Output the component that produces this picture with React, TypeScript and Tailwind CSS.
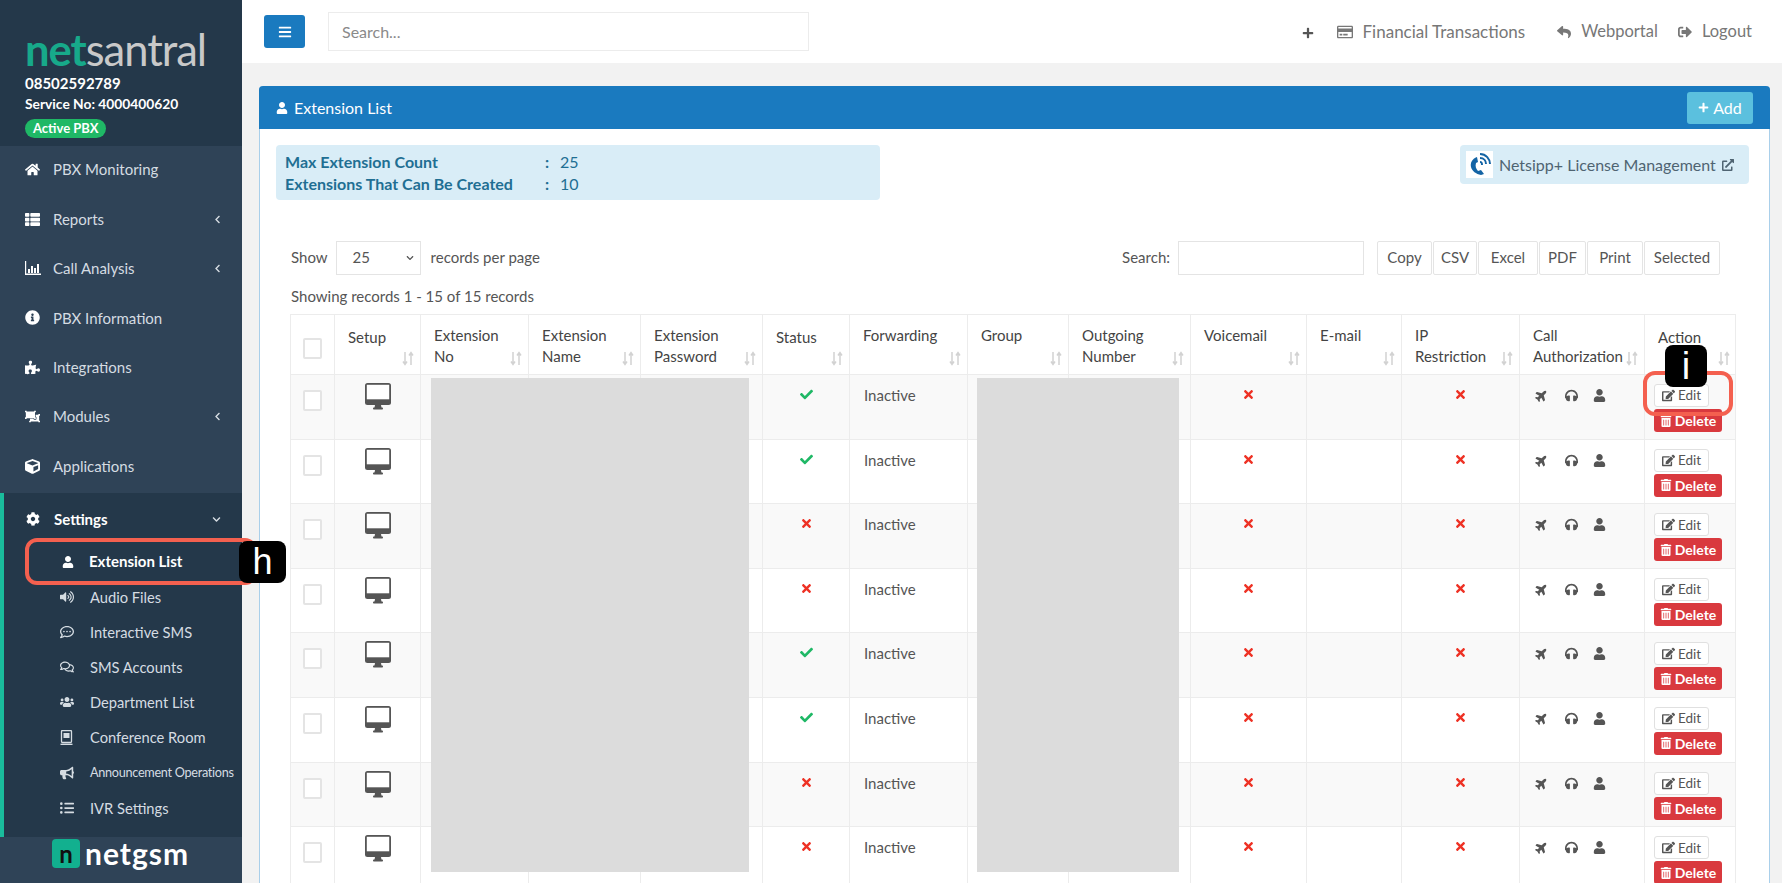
import type { ReactNode } from "react";
import {
  FaBars,
  FaBullhorn,
  FaCheck,
  FaChevronDown,
  FaChevronLeft,
  FaCog,
  FaCube,
  FaEdit,
  FaExternalLinkAlt,
  FaHeadphones,
  FaHome,
  FaInfoCircle,
  FaListUl,
  FaObjectUngroup,
  FaPlane,
  FaPlus,
  FaPuzzlePiece,
  FaRegComments,
  FaRegCommentDots,
  FaRegCreditCard,
  FaReply,
  FaSignOutAlt,
  FaThList,
  FaTimes,
  FaTrashAlt,
  FaUser,
  FaUsers,
  FaVolumeUp,
} from "react-icons/fa";

const font = "font-['Lato','Open_Sans',sans-serif]";

function BarChartIcon() {
  return (
    <svg width="16" height="14" viewBox="0 0 16 14" fill="currentColor">
      <path d="M0 0h1.2v12.6H16V14H0z" />
      <path d="M3 8h2v4H3zM6 5h2v7H6zM9 7h2v5H9zM12 3h2v9h-2z" />
    </svg>
  );
}

function ConferenceIcon() {
  return (
    <svg width="13" height="15" viewBox="0 0 13 15" fill="none" stroke="currentColor">
      <rect x="1.5" y="0.5" width="10" height="12" rx="1" strokeWidth="1.3" />
      <rect x="3.5" y="3" width="6" height="5" fill="currentColor" stroke="none" />
      <path d="M0.5 14.3h12" strokeWidth="1.4" />
    </svg>
  );
}

function MonitorIcon() {
  return (
    <svg width="26" height="27" viewBox="0 0 26 27">
      <rect x="0" y="0" width="26" height="22" rx="2.5" fill="#555" />
      <rect x="1.8" y="1.8" width="22.4" height="14.5" fill="#fff" />
      <path d="M10 22h6l.6 3H9.4z" fill="#555" />
      <rect x="8" y="24.6" width="10" height="2" rx="0.8" fill="#555" />
    </svg>
  );
}

const mainMenu = [
  { label: "PBX Monitoring", icon: <FaHome />, arrow: false },
  { label: "Reports", icon: <FaThList />, arrow: true },
  { label: "Call Analysis", icon: <BarChartIcon />, arrow: true },
  { label: "PBX Information", icon: <FaInfoCircle />, arrow: false },
  { label: "Integrations", icon: <FaPuzzlePiece />, arrow: false },
  { label: "Modules", icon: <FaObjectUngroup />, arrow: true },
  { label: "Applications", icon: <FaCube />, arrow: false },
];

const subMenu: { label: string; icon: ReactNode; small?: boolean }[] = [
  { label: "Audio Files", icon: <FaVolumeUp /> },
  { label: "Interactive SMS", icon: <FaRegCommentDots /> },
  { label: "SMS Accounts", icon: <FaRegComments /> },
  { label: "Department List", icon: <FaUsers /> },
  { label: "Conference Room", icon: <ConferenceIcon /> },
  { label: "Announcement Operations", icon: <FaBullhorn />, small: true },
  { label: "IVR Settings", icon: <FaListUl /> },
];

const columns = [
  { label: ["Setup"], width: "w-[86px]", single: true },
  { label: ["Extension", "No"], width: "w-[108px]" },
  { label: ["Extension", "Name"], width: "w-[112px]" },
  { label: ["Extension", "Password"], width: "w-[122px]" },
  { label: ["Status"], width: "w-[87px]", single: true },
  { label: ["Forwarding"], width: "w-[118px]" },
  { label: ["Group"], width: "w-[101px]" },
  { label: ["Outgoing", "Number"], width: "w-[122px]" },
  { label: ["Voicemail"], width: "w-[116px]" },
  { label: ["E-mail"], width: "w-[95px]" },
  { label: ["IP", "Restriction"], width: "w-[118px]" },
  { label: ["Call", "Authorization"], width: "w-[125px]" },
  { label: ["Action"], width: "w-[91px]", single: true },
];

const exportButtons = [
  { label: "Copy", width: "w-[55px]" },
  { label: "CSV", width: "w-[44px]" },
  { label: "Excel", width: "w-[60px]" },
  { label: "PDF", width: "w-[47px]" },
  { label: "Print", width: "w-[56px]" },
  { label: "Selected", width: "w-[76px]" },
];

const statuses = [true, true, false, false, true, true, false, false];

function SortIcon() {
  return (
    <svg width="12" height="15" viewBox="0 0 12 15" className="text-[#d2d2d2]" fill="none" stroke="currentColor" strokeWidth="1.5">
      <path d="M3 1v12M1 10.5l2 3 2-3" />
      <path d="M9 14V2M7 4.5l2-3 2 3" />
    </svg>
  );
}

function Row({ active, index }: { active: boolean; index: number }) {
  const cell = "border-r border-[#ececec] shrink-0";
  return (
    <div className={`flex h-[64.6px] border-b border-[#ececec] ${index % 2 === 0 ? "bg-[#f9f9f9]" : "bg-white"}`}>
      <div className={`${cell} flex w-[44px] justify-center pt-[15px]`}>
        <span className="h-[21px] w-[19px] rounded-[2px] border-2 border-[#e4e4e4] bg-white" />
      </div>
      <div className={`${cell} flex w-[86px] justify-center pt-[8px]`}>
        <MonitorIcon />
      </div>
      <div className={`${cell} w-[108px]`} />
      <div className={`${cell} w-[112px]`} />
      <div className={`${cell} w-[122px]`} />
      <div className={`${cell} flex w-[87px] justify-center pt-[13px] text-[13px]`}>
        {active ? <FaCheck className="text-[#1fb866]" /> : <FaTimes className="text-[#ee3124]" />}
      </div>
      <div className={`${cell} w-[118px] pl-[14px] pt-[9px] text-[15px] text-[#555]`}>Inactive</div>
      <div className={`${cell} w-[101px]`} />
      <div className={`${cell} w-[122px]`} />
      <div className={`${cell} flex w-[116px] justify-center pt-[13px] text-[13px] text-[#ee3124]`}>
        <FaTimes />
      </div>
      <div className={`${cell} w-[95px]`} />
      <div className={`${cell} flex w-[118px] justify-center pt-[13px] text-[13px] text-[#ee3124]`}>
        <FaTimes />
      </div>
      <div className={`${cell} flex w-[125px] gap-[15px] pl-[15px] pt-[14px] text-[13px] text-[#555]`}>
        <FaPlane className="-rotate-45" />
        <FaHeadphones className="ml-[2px]" />
        <FaUser />
      </div>
      <div className="flex w-[91px] shrink-0 flex-col items-start gap-[2px] pl-[9px] pt-[9px]">
        <div className="flex h-[23px] w-[55px] items-center justify-center gap-[3px] rounded-[3px] border border-[#e0e0e0] bg-white text-[13.5px] text-[#555]">
          <FaEdit className="text-[13px]" />
          Edit
        </div>
        <div className="flex h-[23px] w-[68px] items-center justify-center gap-[3px] rounded-[3px] bg-[#d9393e] text-[14px] font-bold text-white">
          <FaTrashAlt className="text-[12px]" />
          Delete
        </div>
      </div>
    </div>
  );
}

export default function App() {
  return (
    <div className={`${font} relative flex h-[883px] w-[1782px] overflow-hidden bg-[#f2f2f2] text-[#555]`}>
      <aside className="flex w-[242px] shrink-0 flex-col bg-[#2f4357] text-[#d5dce2]">
        <div className="h-[146px] shrink-0 bg-[#24384a] pl-[25px] pt-[26px]">
          <div className="h-[46px] whitespace-nowrap text-[43.5px] leading-[46px] tracking-[-1px]">
            <span className="font-bold text-[#17a98a]">net</span>
            <span className="text-[#c9c9c9]">santral</span>
          </div>
          <div className="mt-[1px] text-[15px] font-bold leading-[21px] text-white">08502592789</div>
          <div className="text-[13.8px] font-bold leading-[20px] text-white">Service No: 4000400620</div>
          <span className="mt-[5px] inline-flex h-[19px] items-center rounded-full bg-[#1fb866] px-[8px] text-[13px] font-bold text-white">
            Active PBX
          </span>
        </div>

        <nav className="-mt-[1px] flex h-[348px] shrink-0 flex-col">
          {mainMenu.map((item) => (
            <div key={item.label} className="flex h-[49.4px] shrink-0 items-center pl-[25px] pr-[20px] text-[15px]">
              <span className="w-[28px] text-[15px] text-white">{item.icon}</span>
              <span className="flex-1">{item.label}</span>
              {item.arrow && <FaChevronLeft className="text-[9px]" />}
            </div>
          ))}
        </nav>

        <div className="h-[344px] shrink-0 border-l-4 border-[#1abc9c] bg-[#24384a]">
          <div className="flex h-[51px] items-center pl-[22px] pr-[21px] pt-[1px] text-[15px] font-bold text-white">
            <FaCog className="mr-[14px] text-[14px]" />
            <span className="flex-1">Settings</span>
            <FaChevronDown className="text-[9px] text-[#d5dce2]" />
          </div>
          <div className="flex h-[35px] items-center pl-[58px] text-[15px] font-bold text-white">
            <FaUser className="mr-[15px] w-[12px] text-[12px]" />
            Extension List
          </div>
          {subMenu.map((item) => (
            <div key={item.label} className="flex h-[35.2px] items-center pl-[56px]">
              <span className="w-[30px] text-[14px]">{item.icon}</span>
              <span className={item.small ? "whitespace-nowrap text-[12.7px] tracking-[-0.3px]" : "text-[14.7px]"}>{item.label}</span>
            </div>
          ))}
        </div>

        <div className="flex flex-1 items-start pl-[52px] pt-[2px]">
          <span className="mr-[5px] flex h-[29px] w-[28px] items-center justify-center rounded-[4px] bg-[#12b08f] text-[24px] font-bold leading-none text-[#111]">
            n
          </span>
          <span className="text-[30px] font-bold leading-[29px] tracking-[1px] text-white">netgsm</span>
        </div>
      </aside>

      <main className="flex min-w-0 flex-1 flex-col">
        <header className="flex h-[63px] shrink-0 items-center bg-white pl-[22px] pr-[30px]">
          <button className="flex h-[33px] w-[41px] items-center justify-center rounded-[3px] bg-[#1a7abf] text-[14px] text-white">
            <FaBars />
          </button>
          <div className="ml-[23px] flex h-[39px] w-[481px] items-center border border-[#ececec] pl-[13px] text-[16px] text-[#8a8a8a]">Search...</div>
          <div className="ml-auto flex items-center text-[16.5px] text-[#777]">
            <FaPlus className="mr-[23px] mt-[2px] text-[12px] text-[#555]" />
            <FaRegCreditCard className="mr-[10px] text-[16px]" />
            <span className="text-[17px]">Financial Transactions</span>
            <FaReply className="ml-[32px] mr-[10px] text-[14px]" />
            <span>Webportal</span>
            <FaSignOutAlt className="ml-[20px] mr-[10px] text-[14px]" />
            <span>Logout</span>
          </div>
        </header>

        <section className="ml-[17px] mr-[12px] mt-[23px] flex min-h-0 flex-1 flex-col rounded-t-[4px] border-x border-[#a9cfea] bg-white">
          <div className="-mx-px flex h-[43px] shrink-0 items-center justify-between rounded-t-[4px] bg-[#1a7abf] pl-[17px] text-white">
            <div className="flex items-center gap-[6px] text-[16px]">
              <FaUser className="text-[12px]" />
              Extension List
            </div>
            <div className="mr-[17px] flex h-[32px] w-[66px] items-center justify-center gap-[4px] rounded-[3px] bg-[#5bc0de] text-[16px]">
              <FaPlus className="text-[11px]" />
              Add
            </div>
          </div>

          <div className="flex items-start justify-between pl-[16px] pr-[20px] pt-[16px]">
            <div className="grid h-[55px] w-[604px] grid-cols-[260px_15px_40px] content-center rounded-[4px] bg-[#d9edf7] pl-[9px] text-[16px] leading-[21.5px] text-[#1f6f93]">
              <span className="font-bold">Max Extension Count</span>
              <span className="font-bold">:</span>
              <span>25</span>
              <span className="font-bold">Extensions That Can Be Created</span>
              <span className="font-bold">:</span>
              <span>10</span>
            </div>
            <div className="flex h-[39px] w-[289px] items-center rounded-[4px] bg-[#d9edf7] pl-[6px] text-[16px] text-[#4f6472]">
              <span className="mr-[6px] flex h-[27px] w-[27px] items-center justify-center bg-white">
                <svg width="24" height="25" viewBox="0 0 24 25" fill="none">
                  <path d="M9 5c-5 2-7 6-6 10s5 7 10 8l3-1-3-4-3 1c-2-2-3-5-2-8l2-1z" fill="#1464a5" />
                  <path d="M12 6c4 0 6 3 6 6M12 2c6 0 10 5 10 10M12 10c2 0 2 1 2 3" stroke="#1464a5" strokeWidth="2" />
                </svg>
              </span>
              <span className="whitespace-nowrap">Netsipp+ License Management</span>
              <FaExternalLinkAlt className="ml-[6px] text-[12px]" />
            </div>
          </div>

          <div className="ml-[31px] mr-[49px] mt-[40px] flex h-[35px] shrink-0 items-center text-[15px]">
            <span>Show</span>
            <div className="ml-[8px] flex h-[34px] w-[85px] items-center justify-between border border-[#e4e4e4] pl-[16px] pr-[6px]">
              25
              <FaChevronDown className="text-[8px]" />
            </div>
            <span className="ml-[10px]">records per page</span>
            <span className="ml-auto">Search:</span>
            <div className="ml-[8px] h-[34px] w-[186px] border border-[#e4e4e4]" />
            <div className="ml-[13px] flex gap-[1px]">
              {exportButtons.map((b) => (
                <div key={b.label} className={`${b.width} flex h-[34px] items-center justify-center rounded-[2px] border border-[#e4e4e4] text-[15px]`}>
                  {b.label}
                </div>
              ))}
            </div>
          </div>

          <div className="ml-[31px] mt-[11px] h-[20px] shrink-0 text-[15px] leading-[20px]">Showing records 1 - 15 of 15 records</div>

          <div className="ml-[30px] mt-[8px] w-[1446px] shrink-0 border-x border-t border-[#ececec]">
            <div className="flex h-[60px] border-b border-[#ececec] bg-white">
              <div className="flex w-[44px] shrink-0 justify-center border-r border-[#ececec] pt-[23px]">
                <span className="h-[21px] w-[19px] rounded-[2px] border-2 border-[#e4e4e4] bg-white" />
              </div>
              {columns.map((c) => (
                <div key={c.label[0]} className={`${c.width} ${c.single ? "pt-[12px]" : "pt-[10px]"} relative shrink-0 border-r border-[#ececec] pl-[13px] text-[15px] leading-[21px] text-[#444] last:border-r-0`}>
                  {c.label.map((l) => (
                    <div key={l}>{l}</div>
                  ))}
                  <span className="absolute bottom-[8px] right-[6px]">
                    <SortIcon />
                  </span>
                </div>
              ))}
            </div>
            {statuses.map((s, i) => (
              <Row key={i} active={s} index={i} />
            ))}
          </div>
        </section>
      </main>

      {/* redacted blocks */}
      <div className="absolute left-[431px] top-[378px] h-[494px] w-[318px] bg-[#dcdcdc]" />
      <div className="absolute left-[977px] top-[378px] h-[494px] w-[202px] bg-[#dcdcdc]" />

      {/* callouts */}
      <div className="absolute left-[25px] top-[538px] h-[47px] w-[232px] rounded-[12px] border-[4px] border-[#f4604f]" />
      <div className="absolute left-[239px] top-[541px] flex h-[42px] w-[47px] items-center justify-center rounded-[8px] bg-black font-['Liberation_Sans',sans-serif] text-[36px] leading-none text-white">h</div>
      <div className="absolute left-[1643px] top-[371px] h-[45px] w-[90px] rounded-[12px] border-[4px] border-[#f4604f]" />
      <div className="absolute left-[1665px] top-[345px] flex h-[42px] w-[42px] items-center justify-center rounded-[8px] bg-black font-['Liberation_Sans',sans-serif] text-[38px] leading-none text-white">i</div>
    </div>
  );
}
